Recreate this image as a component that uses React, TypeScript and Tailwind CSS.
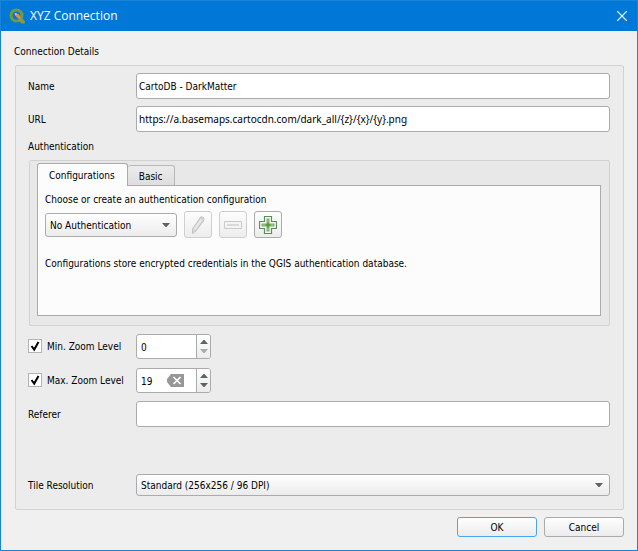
import React, { useState } from "react";

const rowLabel = "w-[108px] shrink-0 pt-0.5";
const field =
  "h-[26px] min-w-0 flex-1 rounded-[3px] border border-[#ababab] bg-white px-0.5 leading-5 outline-none focus:border-[#3daee9]";
const toolButton =
  "flex h-[27px] w-7 items-center justify-center rounded-[3px] border bg-linear-to-b from-[#fdfdfd] to-[#ededed]";
const dialogButton =
  "h-5 w-20 rounded-[3px] border bg-linear-to-b from-[#fefefe] to-[#ececec] pt-0.5 text-center leading-4";

const QgisLogo = () => (
  <svg viewBox="0 0 16 16" className="size-4" aria-hidden="true">
    <circle cx="7.500" cy="7.500" r="5.500" fill="none" stroke="#6f9848" strokeWidth="3.200" />
    <path d="M9.500 9.500l2-.5L15.800 13v2.500h-3.300L9.500 12.500z" fill="#8a9a3e" />
    <path d="M6.500 5.500l3 .5L12 9.500l-2 1.500L7 8.500z" fill="#dd8f45" />
    <path d="M5.500 5l2.500.5L6.500 8z" fill="#f0c894" />
  </svg>
);

const Caret = () => (
  <svg
    viewBox="0 0 8 5"
    className="pointer-events-none absolute top-1/2 right-[7px] h-[5px] w-2 -translate-y-1/2"
    aria-hidden="true"
  >
    <path d="M0 .5h8L4.500 4.500h-1z" fill="#5b6663" />
  </svg>
);

const Dropdown = ({
  id,
  options,
  className,
}: {
  id: string;
  options: string[];
  className: string;
}) => (
  <div className={`relative ${className}`}>
    <select
      id={id}
      className="size-full appearance-none rounded-[3px] border border-[#ababab] bg-linear-to-b from-[#fefefe] to-[#ececec] pt-0.5 pr-5 pl-1 outline-none"
    >
      {options.map((o) => (
        <option key={o}>{o}</option>
      ))}
    </select>
    <Caret />
  </div>
);

const ZoomRow = ({
  id,
  label,
  initial,
  clearable,
}: {
  id: string;
  label: string;
  initial: number;
  clearable?: boolean;
}) => {
  const [enabled, setEnabled] = useState(true);
  const [value, setValue] = useState(initial);

  return (
    <div className="flex">
      <div className="flex h-6 w-[108px] shrink-0 items-center">
        <span className="relative size-3.5 shrink-0">
          <input
            id={id}
            type="checkbox"
            checked={enabled}
            onChange={(e) => setEnabled(e.target.checked)}
            className="peer block size-3.5 appearance-none border border-[#b4b4b4] bg-white"
          />
          <svg
            viewBox="0 0 14 14"
            className="pointer-events-none absolute inset-0 hidden size-3.5 peer-checked:block"
            aria-hidden="true"
          >
            <path d="M3.500 7l2.700 3.600L10.500 3" fill="none" stroke="#000" strokeWidth="2" />
          </svg>
        </span>
        <label htmlFor={id} className="pt-0.5 pl-[5px] whitespace-nowrap">
          {label}
        </label>
      </div>
      <div className="flex h-[25px] w-[75px] overflow-hidden rounded-[3px] border border-[#ababab] bg-white">
        <input
          type="text"
          inputMode="numeric"
          aria-label={label}
          value={value}
          disabled={!enabled}
          onChange={(e) => setValue(Number(e.target.value) || 0)}
          className="w-7 min-w-0 grow pt-0.5 pl-1 outline-none"
        />
        {clearable && (
          <button type="button" aria-label="Clear" onClick={() => setValue(0)} className="mr-3 shrink-0">
            <svg viewBox="0 0 17 13" className="h-[13px] w-[17px]">
              <path d="M4 0h13v13H4L0 8V5z" fill="#979797" />
              <path d="M6.500 3l7 7M13.500 3l-7 7" stroke="#fff" strokeWidth="1.700" />
            </svg>
          </button>
        )}
        <div className="flex w-[14px] shrink-0 flex-col border-l border-[#ababab] bg-linear-to-b from-[#fefefe] to-[#ececec]">
          <button
            type="button"
            aria-label="Increase"
            onClick={() => setValue(value + 1)}
            className="flex flex-1 items-center justify-center pt-0.5"
          >
            <svg viewBox="0 0 8 4" className="h-1 w-2">
              <path d="M0 4h8L4.500 0h-1z" fill="#5b6663" />
            </svg>
          </button>
          <button
            type="button"
            aria-label="Decrease"
            disabled={value === 0}
            onClick={() => setValue(value - 1)}
            className="flex flex-1 items-center justify-center pb-0.5 disabled:opacity-50"
          >
            <svg viewBox="0 0 8 4" className="h-1 w-2">
              <path d="M0 0h8L4.500 4h-1z" fill="#5b6663" />
            </svg>
          </button>
        </div>
      </div>
    </div>
  );
};

const Authentication = () => {
  const [tab, setTab] = useState("Configurations");

  return (
    <div className="ml-px rounded-[2px] border border-[#d2d2d2] bg-[#e8e8e8] pt-0.5 pr-2 pb-[9px] pl-[7px]">
      <div role="tablist" className="flex h-[22px] items-end">
        {["Configurations", "Basic"].map((name) => (
          <button
            key={name}
            type="button"
            role="tab"
            aria-selected={tab === name}
            onClick={() => setTab(name)}
            className={
              tab === name
                ? "relative z-10 -mb-px h-[23px] rounded-t-[3px] border border-b-0 border-[#ababab] bg-[#fcfcfc] pt-0.5 pr-3 pl-[11px]"
                : "h-5 rounded-t-[3px] border border-b-0 border-l-0 border-[#b8b8b8] bg-linear-to-b from-[#ececec] to-[#dedede] px-[11px] pt-0.5"
            }
          >
            {name}
          </button>
        ))}
      </div>
      <div className="h-[131px] border border-[#ababab] bg-[#fcfcfc] px-[7px] pt-[5px]">
        <label htmlFor="auth" className="block h-[18px] leading-[18px]">
          Choose or create an authentication configuration
        </label>
        <div className="mt-0.5 flex items-center gap-[7px]">
          <Dropdown id="auth" options={["No Authentication"]} className="h-6 w-[132px]" />
          <button type="button" disabled aria-label="Edit" className={`${toolButton} border-[#cfcfcf]`}>
            <svg viewBox="0 0 18 20" className="h-5 w-[18px]">
              <path d="M12 1.500l3 1.500-.5 3L7 16l-3.500 2.500L3.500 14z" fill="#d6d6d6" stroke="#c4c4c4" />
              <path d="M5.500 14.500l7-10" stroke="#ececec" strokeWidth="1.500" />
            </svg>
          </button>
          <button type="button" disabled aria-label="Remove" className={`${toolButton} border-[#cfcfcf]`}>
            <svg viewBox="0 0 18 8" className="h-2 w-[18px]">
              <path d="M.5.500h17v7H.5z" fill="#f4f4f4" stroke="#cbcbcb" />
              <path d="M3 3h12v2H3z" fill="#dadada" />
            </svg>
          </button>
          <button type="button" aria-label="Add" className={`${toolButton} border-[#ababab]`}>
            <svg viewBox="0 0 18 18" className="size-[18px]">
              <path
                d="M5.500.5h7v5h5v7h-5v5h-7v-5h-5v-7h5z"
                fill="#f6f8f4"
                stroke="#5f8a5a"
                strokeWidth="1.200"
              />
              <path d="M9 2.500v13M2.500 9h13" stroke="#7fa872" strokeWidth="3" />
              <path d="M9 3.500v11M3.500 9h11" stroke="#a3cf84" strokeWidth="1" />
              <path d="M6.500 9h5M9 6.500v5" stroke="#4f9a35" strokeWidth="1.500" />
            </svg>
          </button>
        </div>
        <p className="mt-[17px] leading-[18px]">
          Configurations store encrypted credentials in the QGIS authentication database.
        </p>
      </div>
    </div>
  );
};

export default function App() {
  return (
    <div className="flex min-h-screen flex-col border border-[#1883d7] bg-[#f0f0f0] font-['DejaVu_Sans_Condensed','DejaVu_Sans',sans-serif] text-[10px] leading-4 text-black">
      <header className="flex h-[30px] shrink-0 items-center bg-[#0078d7] pr-2 pl-2 text-white">
        <QgisLogo />
        <h1 className="ml-[5px] flex-1 font-['Open_Sans',sans-serif] text-[12px]">XYZ Connection</h1>
        <button type="button" aria-label="Close" className="p-0.5">
          <svg viewBox="0 0 10 10" className="size-2.5">
            <path d="M0 0l10 10M10 0L0 10" stroke="#fff" strokeWidth="1.200" />
          </svg>
        </button>
      </header>

      <form
        className="flex flex-1 flex-col px-[13px] pb-[13px]"
        onSubmit={(e) => e.preventDefault()}
      >
        <h2 className="h-[34px] pt-[13px]">Connection Details</h2>
        <div className="ml-px flex flex-1 flex-col rounded-[2px] border border-[#d2d2d2] bg-[#ececec] pt-[7px] pr-[13px] pb-[13px] pl-3">
          <div className="flex items-center">
            <label htmlFor="name" className={rowLabel}>Name</label>
            <input id="name" type="text" defaultValue="CartoDB - DarkMatter" className={field} />
          </div>
          <div className="mt-[7px] flex items-center">
            <label htmlFor="url" className={rowLabel}>URL</label>
            <input
              id="url"
              type="text"
              defaultValue="https://a.basemaps.cartocdn.com/dark_all/{z}/{x}/{y}.png"
              className={`${field} font-['Noto_Sans',sans-serif]`}
            />
          </div>

          <h3 className="h-7 pt-0.5 leading-[26px]">Authentication</h3>
          <Authentication />

          <div className="mt-2 flex flex-col gap-[9px]">
            <ZoomRow id="min-zoom" label="Min. Zoom Level" initial={0} />
            <ZoomRow id="max-zoom" label="Max. Zoom Level" initial={19} clearable />
          </div>
          <div className="mt-2 flex items-center">
            <label htmlFor="referer" className={rowLabel}>Referer</label>
            <input id="referer" type="text" className={field} />
          </div>

          <div className="mt-auto flex items-center pt-6">
            <label htmlFor="resolution" className={rowLabel}>Tile Resolution</label>
            <Dropdown
              id="resolution"
              options={["Standard (256x256 / 96 DPI)", "High (512x512 / 192 DPI)"]}
              className="h-[22px] flex-1"
            />
          </div>
        </div>

        <div className="mt-[7px] flex justify-end gap-[7px]">
          <button type="submit" className={`${dialogButton} border-[#4ba6ee]`}>OK</button>
          <button type="button" className={`${dialogButton} border-[#ababab]`}>Cancel</button>
        </div>
      </form>
    </div>
  );
}
